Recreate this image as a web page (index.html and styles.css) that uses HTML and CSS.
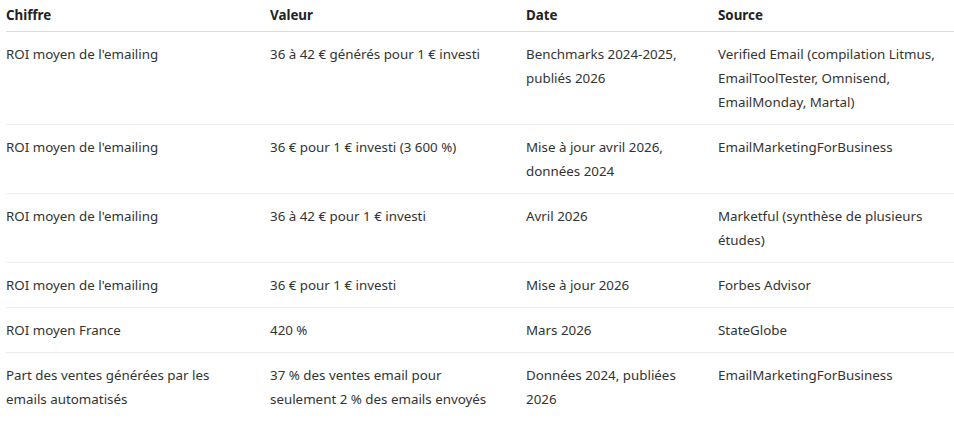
FILE: index.html
```html
<!DOCTYPE html>
<html lang="fr">
<head>
<meta charset="utf-8">
<title>ROI emailing</title>
<link rel="stylesheet" href="styles.css">
</head>
<body>
<table class="stats">
  <colgroup>
    <col class="c1"><col class="c2"><col class="c3"><col class="c4">
  </colgroup>
  <thead>
    <tr><th>Chiffre</th><th>Valeur</th><th>Date</th><th>Source</th></tr>
  </thead>
  <tbody>
    <tr>
      <td>ROI moyen de l'emailing</td>
      <td>36 à 42 € générés pour 1 € investi</td>
      <td>Benchmarks 2024-2025,<br>publiés 2026</td>
      <td>Verified Email (compilation Litmus,<br>EmailToolTester, Omnisend,<br>EmailMonday, Martal)</td>
    </tr>
    <tr>
      <td>ROI moyen de l'emailing</td>
      <td>36 € pour 1 € investi (3 600 %)</td>
      <td>Mise à jour avril 2026,<br>données 2024</td>
      <td>EmailMarketingForBusiness</td>
    </tr>
    <tr>
      <td>ROI moyen de l'emailing</td>
      <td>36 à 42 € pour 1 € investi</td>
      <td>Avril 2026</td>
      <td>Marketful (synthèse de plusieurs<br>études)</td>
    </tr>
    <tr>
      <td>ROI moyen de l'emailing</td>
      <td>36 € pour 1 € investi</td>
      <td>Mise à jour 2026</td>
      <td>Forbes Advisor</td>
    </tr>
    <tr>
      <td>ROI moyen France</td>
      <td>420 %</td>
      <td>Mars 2026</td>
      <td>StateGlobe</td>
    </tr>
    <tr>
      <td>Part des ventes générées par les<br>emails automatisés</td>
      <td>37 % des ventes email pour<br>seulement 2 % des emails envoyés</td>
      <td>Données 2024, publiées<br>2026</td>
      <td>EmailMarketingForBusiness</td>
    </tr>
  </tbody>
</table>
</body>
</html>
```
FILE: styles.css
```css
html, body {
  margin: 0;
  padding: 0;
  background: #ffffff;
}
body {
  padding-left: 6px;
  font-family: "Noto Sans", "DejaVu Sans", sans-serif;
  font-size: 13.35px;
  color: #333333;
}
.stats {
  border-collapse: collapse;
  table-layout: fixed;
  width: 948px;
}
.c1 { width: 264px; }
.c2 { width: 256px; }
.c3 { width: 192px; }
.c4 { width: 236px; }
.stats th,
.stats td {
  text-align: left;
  vertical-align: top;
  line-height: 24px;
  padding: 10px 8px 10px 0;
  white-space: nowrap;
}
.stats th {
  font-weight: 700;
  color: #222222;
  padding-top: 3px;
  padding-bottom: 4px;
  border-bottom: 1px solid #dcdcdc;
}
.stats tbody tr + tr td {
  border-top: 1px solid #ededed;
}
```
